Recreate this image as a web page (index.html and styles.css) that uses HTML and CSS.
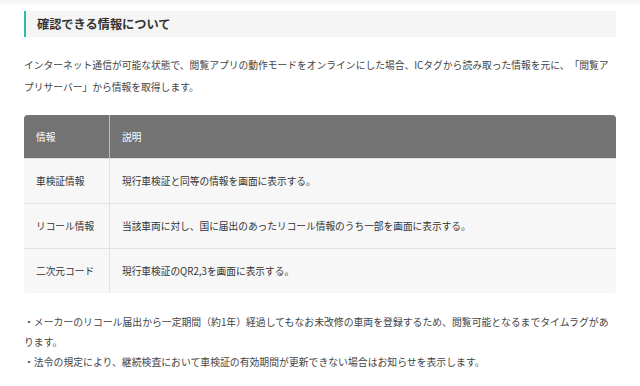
FILE: index.html
```html
<!DOCTYPE html>
<html lang="ja">
<head>
  <meta charset="UTF-8">
  <title>確認できる情報について</title>
  <link rel="stylesheet" href="styles.css">
</head>
<body>
<div class="page">
  <h2 class="ttl">確認できる情報について</h2>
  <p class="lead">インターネット通信が可能な状態で、閲覧アプリの動作モードをオンラインにした場合、ICタグから読み取った情報を元に、「閲覧アプリサーバー」から情報を取得します。</p>

  <table class="info">
    <thead>
      <tr>
        <th class="col-name">情報</th>
        <th>説明</th>
      </tr>
    </thead>
    <tbody>
      <tr>
        <td class="col-name">車検証情報</td>
        <td>現行車検証と同等の情報を画面に表示する。</td>
      </tr>
      <tr>
        <td class="col-name">リコール情報</td>
        <td>当該車両に対し、国に届出のあったリコール情報のうち一部を画面に表示する。</td>
      </tr>
      <tr>
        <td class="col-name">二次元コード</td>
        <td>現行車検証のQR2,3を画面に表示する。</td>
      </tr>
    </tbody>
  </table>

  <ul class="notes">
    <li>・メーカーのリコール届出から一定期間（約1年）経過してもなお未改修の車両を登録するため、閲覧可能となるまでタイムラグがあります。</li>
    <li>・法令の規定により、継続検査において車検証の有効期間が更新できない場合はお知らせを表示します。</li>
  </ul>
</div>
</body>
</html>
```

FILE: styles.css
```css
*{padding: 0; margin: 0; box-sizing: border-box;}
li{list-style: none;}
html, body{
  background: #fff;
}
body{
  font-family: "Noto Sans CJK JP", "Noto Sans", sans-serif;
  color: #333;
  text-spacing-trim: space-all;
  background: linear-gradient(rgba(0,0,0,.06), rgba(0,0,0,0) 6px) no-repeat;
}
.page{
  padding: 11px 24px 0;
}
.ttl{
  height: 26px;
  line-height: 26px;
  padding-left: 11px;
  font-size: 12.2px;
  font-weight: bold;
  color: #333;
  background-color: #f5f5f5;
  border-left: 2.5px solid #2fbaab;
}
.lead{
  margin-top: 18px;
  font-size: 9.78px;
  line-height: 21.5px;
  color: #444;
}
.info{
  width: 100%;
  margin-top: 17px;
  border-collapse: separate;
  border-spacing: 0;
  border-radius: 4px;
  overflow: hidden;
  font-size: 9.7px;
  background-color: #f7f7f7;
}
.info th,
.info td{
  text-align: left;
  font-weight: normal;
  padding: 0 12px;
  vertical-align: middle;
}
.info th{
  height: 44px;
  color: #fff;
  background-color: #737373;
  border-bottom: 1px solid #ddd;
}
.info th.col-name{
  border-right: 1px solid #bdbdbd;
}
.info td{
  height: 45px;
  color: #333;
  border-top: 1px solid #e2e2e2;
}
.info tbody tr:first-child td{
  border-top: 0;
  height: 44px;
}
.info .col-name{
  width: 86px;
}
.info td.col-name{
  border-right: 1px solid #e2e2e2;
}
.notes{
  margin-top: 19px;
  font-size: 9.85px;
  line-height: 20px;
  color: #444;
}
```
